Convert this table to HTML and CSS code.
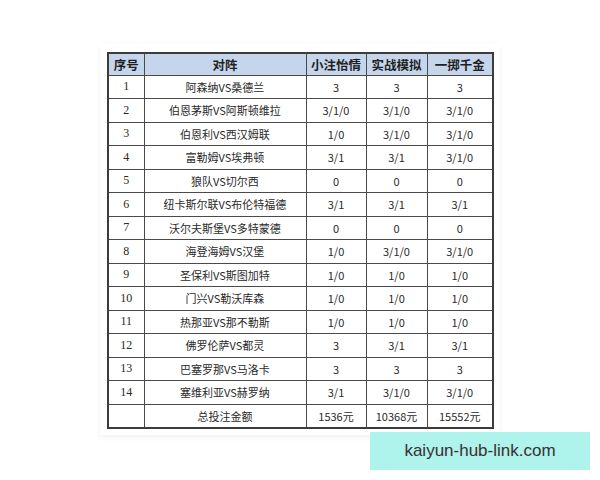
FILE: index.html
```html
<!DOCTYPE html>
<html lang="zh">
<head>
<meta charset="utf-8">
<title>胜负彩</title>
<link rel="stylesheet" href="styles.css">
</head>
<body>
<div class="page">
  <div class="card">
    <table class="plan">
      <colgroup>
        <col class="c-no"><col class="c-match"><col class="c-a"><col class="c-b"><col class="c-c">
      </colgroup>
      <thead>
        <tr><th>序号</th><th>对阵</th><th>小注怡情</th><th>实战模拟</th><th>一掷千金</th></tr>
      </thead>
      <tbody>
        <tr><td>1</td><td>阿森纳VS桑德兰</td><td>3</td><td>3</td><td>3</td></tr>
        <tr><td>2</td><td>伯恩茅斯VS阿斯顿维拉</td><td>3/1/0</td><td>3/1/0</td><td>3/1/0</td></tr>
        <tr><td>3</td><td>伯恩利VS西汉姆联</td><td>1/0</td><td>3/1/0</td><td>3/1/0</td></tr>
        <tr><td>4</td><td>富勒姆VS埃弗顿</td><td>3/1</td><td>3/1</td><td>3/1/0</td></tr>
        <tr><td>5</td><td>狼队VS切尔西</td><td>0</td><td>0</td><td>0</td></tr>
        <tr><td>6</td><td>纽卡斯尔联VS布伦特福德</td><td>3/1</td><td>3/1</td><td>3/1</td></tr>
        <tr><td>7</td><td>沃尔夫斯堡VS多特蒙德</td><td>0</td><td>0</td><td>0</td></tr>
        <tr><td>8</td><td>海登海姆VS汉堡</td><td>1/0</td><td>3/1/0</td><td>3/1/0</td></tr>
        <tr><td>9</td><td>圣保利VS斯图加特</td><td>1/0</td><td>1/0</td><td>1/0</td></tr>
        <tr><td>10</td><td>门兴VS勒沃库森</td><td>1/0</td><td>1/0</td><td>1/0</td></tr>
        <tr><td>11</td><td>热那亚VS那不勒斯</td><td>1/0</td><td>1/0</td><td>1/0</td></tr>
        <tr><td>12</td><td>佛罗伦萨VS都灵</td><td>3</td><td>3/1</td><td>3/1</td></tr>
        <tr><td>13</td><td>巴塞罗那VS马洛卡</td><td>3</td><td>3</td><td>3</td></tr>
        <tr><td>14</td><td>塞维利亚VS赫罗纳</td><td>3/1</td><td>3/1/0</td><td>3/1/0</td></tr>
        <tr><td></td><td>总投注金额</td><td>1536元</td><td>10368元</td><td>15552元</td></tr>
      </tbody>
    </table>
  </div>
  <div class="mark">kaiyun-hub-link.com</div>
</div>
</body>
</html>
```
FILE: styles.css
```css
html, body {
  margin: 0;
  padding: 0;
  background: #ffffff;
}
.page {
  width: 600px;
  height: 480px;
  padding-top: 44px;
  box-sizing: border-box;
  font-family: "Noto Sans CJK SC", "DejaVu Sans", sans-serif;
}
.card {
  margin-left: 100px;
  width: 400px;
  padding: 8px 0 6px 7px;
  box-sizing: border-box;
  background: #ffffff;
  box-shadow: 0 2px 6px rgba(0, 0, 0, 0.06);
}
.plan {
  border-collapse: collapse;
  table-layout: fixed;
  width: 385px;
  border: 2px solid #3c3c3c;
}
.c-no { width: 36px; }
.c-match { width: 162px; }
.c-a { width: 60px; }
.c-b { width: 61px; }
.c-c { width: 66px; }
.plan th, .plan td {
  border: 1.5px solid #4a4a4a;
  text-align: center;
  padding: 0;
  color: #2a2a2a;
  white-space: nowrap;
}
.plan th {
  background: #c5d6ec;
  height: 20.5px;
  font-size: 12.5px;
  font-weight: 700;
  color: #1f1f1f;
}
.plan td {
  height: 22.5px;
  font-size: 11px;
}
.plan td:first-child {
  font-family: "Liberation Serif", "Noto Sans CJK SC", serif;
  font-size: 12px;
}
.mark {
  margin-left: 370px;
  margin-top: -3px;
  width: 220px;
  height: 38px;
  background: #aef3ec;
  color: #3a3030;
  font-family: "Liberation Sans", Arial, sans-serif;
  font-size: 17px;
  display: flex;
  align-items: center;
  justify-content: center;
}
```
